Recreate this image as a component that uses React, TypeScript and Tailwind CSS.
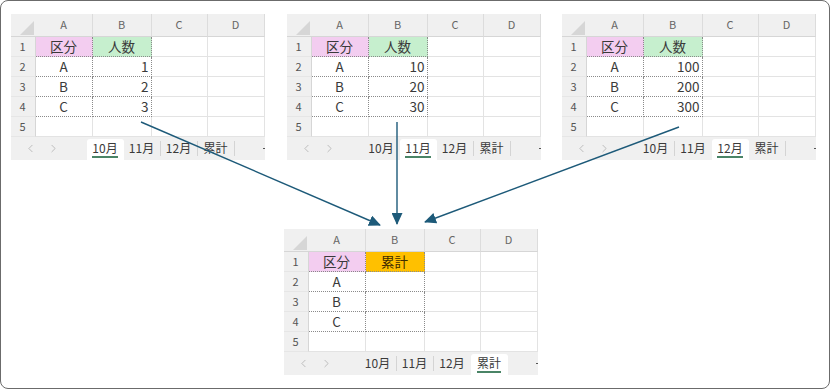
import { ChevronLeft, ChevronRight } from 'lucide-react';

const TABS = ['10月', '11月', '12月', '累計'];
const COLS = ['A', 'B', 'C', 'D'];
const KEYS = ['A', 'B', 'C'];

interface SheetProps {
  head: string;
  headClass: string;
  values: string[];
  active: number;
  className?: string;
}

const grid = 'border-r border-b border-[#e3e3e3]';
const dotted = 'border-r border-b border-dotted border-[#8a8a8a]';

function Sheet({ head, headClass, values, active, className = '' }: SheetProps) {
  return (
    <div className={`w-[254px] h-[146px] flex flex-col bg-white ${className}`}>
      <div className="grid grid-cols-[25px_57px_59px_56px_57px] grid-rows-[23px_20px_20px_20px_20px_20px] text-[13.5px] text-[#3a3a3a]">
        {/* 左上の三角 */}
        <div className="bg-[#f0f0f0] border-b border-[#d6d6d6]">
          <svg width="25" height="23" viewBox="0 0 25 23">
            <polygon points="23,7 23,21 9,21" fill="#d6d6d6" />
          </svg>
        </div>
        {COLS.map((c) => (
          <div
            key={c}
            className="bg-[#f0f0f0] border-r border-b border-r-[#dcdcdc] border-b-[#d6d6d6] flex items-center justify-center text-[11px] text-[#666]"
          >
            {c}
          </div>
        ))}

        {[1, 2, 3, 4, 5].map((r) => (
          <RowCells key={r} r={r} head={head} headClass={headClass} values={values} />
        ))}
      </div>

      {/* シートタブ */}
      <div className="h-[23px] bg-[#f0f0f0] flex items-stretch text-[12px] text-[#3a3a3a]">
        <div className="w-[76px] flex items-center pl-[13px] gap-[10px] text-[#a8a8a8]">
          <ChevronLeft size={13} strokeWidth={1.3} />
          <ChevronRight size={13} strokeWidth={1.3} />
        </div>
        {TABS.map((t, i) =>
          i === active ? (
            <div
              key={t}
              className="w-[37px] mt-[2px] bg-white rounded-t-[3px] flex items-center justify-center"
            >
              <span className="leading-[14px] border-b-2 border-[#4a8466] pb-[1px]">{t}</span>
            </div>
          ) : (
            <div
              key={t}
              className={`w-[37px] my-[4px] flex items-center justify-center ${
                i + 1 !== active ? 'border-r border-[#d4d4d4]' : ''
              }`}
            >
              {t}
            </div>
          )
        )}
        <div className="ml-auto self-center w-[2px] h-[1px] bg-[#555]" />
      </div>
    </div>
  );
}

function RowCells({
  r,
  head,
  headClass,
  values,
}: {
  r: number;
  head: string;
  headClass: string;
  values: string[];
}) {
  const inTable = r <= 4;
  return (
    <>
      <div className="bg-[#f0f0f0] border-r border-b border-r-[#d6d6d6] border-b-[#e6e6e6] flex items-center justify-center text-[11px] text-[#555]">
        {r}
      </div>
      {r === 1 ? (
        <>
          <div className={`${dotted} bg-[#f3cdf0] flex items-center justify-center`}>区分</div>
          <div className={`${dotted} ${headClass} flex items-center justify-center`}>{head}</div>
        </>
      ) : inTable ? (
        <>
          <div className={`${dotted} flex items-center justify-center`}>{KEYS[r - 2]}</div>
          <div className={`${dotted} flex items-center justify-end pr-[2px]`}>{values[r - 2]}</div>
        </>
      ) : (
        <>
          <div className={grid} />
          <div className={grid} />
        </>
      )}
      <div className={grid} />
      <div className={grid} />
    </>
  );
}

export default function App() {
  return (
    <div className="relative w-[830px] h-[389px] bg-white font-['Noto_Sans_CJK_JP','Noto_Sans',sans-serif]">
      <div className="w-full h-full border-[1.5px] border-[#6b6b6b] rounded-[8px] pt-[12.5px] pl-[9.5px]">
        <div className="flex">
          <Sheet head="人数" headClass="bg-[#c6efce]" values={['1', '2', '3']} active={0} />
          <Sheet
            head="人数"
            headClass="bg-[#c6efce]"
            values={['10', '20', '30']}
            active={1}
            className="ml-[22px]"
          />
          <Sheet
            head="人数"
            headClass="bg-[#c6efce]"
            values={['100', '200', '300']}
            active={2}
            className="ml-[21px]"
          />
        </div>
        <Sheet
          head="累計"
          headClass="bg-[#ffc000] text-[#3d2b00]"
          values={['', '', '']}
          active={3}
          className="mt-[69px] ml-[273px]"
        />
      </div>

      {/* 矢印 */}
      <svg
        className="absolute left-0 top-0 pointer-events-none"
        width="830"
        height="389"
        viewBox="0 0 830 389"
      >
        <defs>
          <marker
            id="ah"
            viewBox="0 0 12 11"
            refX="11"
            refY="5.5"
            markerWidth="12"
            markerHeight="11"
            markerUnits="userSpaceOnUse"
            orient="auto"
          >
            <path d="M0,0 L12,5.5 L0,11 z" fill="#1d5a79" />
          </marker>
        </defs>
        <g stroke="#1d5a79" strokeWidth="1.4" fill="none">
          <line x1="141" y1="122" x2="380" y2="225" markerEnd="url(#ah)" />
          <line x1="397" y1="122" x2="397" y2="224" markerEnd="url(#ah)" />
          <line x1="679" y1="127" x2="425" y2="222" markerEnd="url(#ah)" />
        </g>
      </svg>
    </div>
  );
}
